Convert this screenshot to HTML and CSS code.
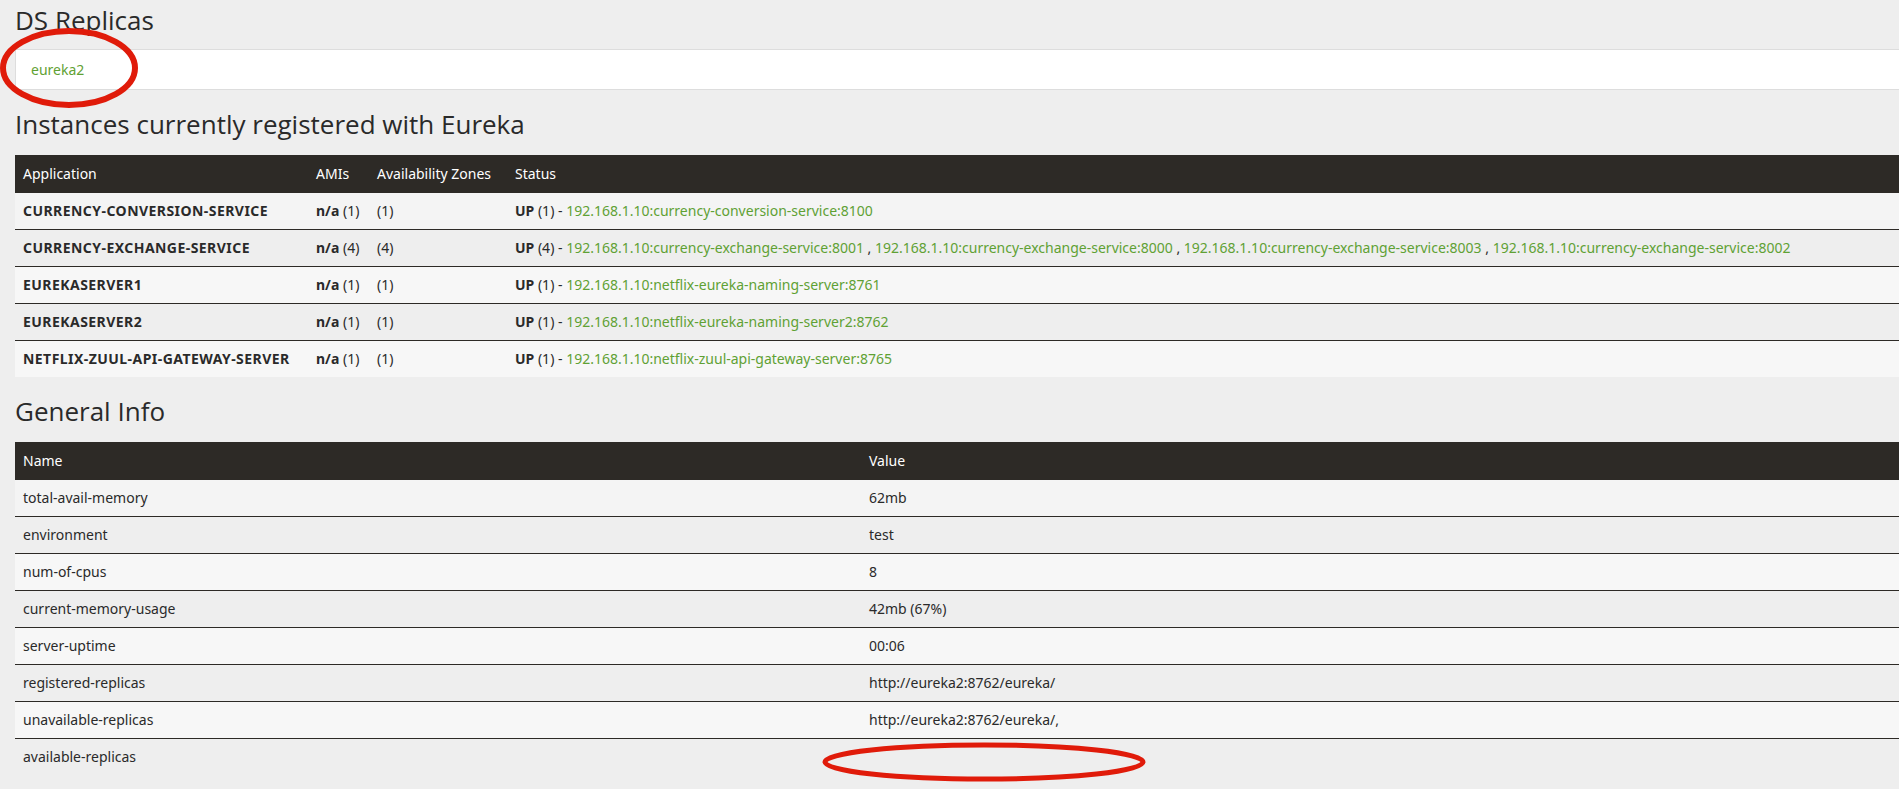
FILE: index.html
```html
<!DOCTYPE html>
<html lang="en">
<head>
<meta charset="UTF-8">
<title>Eureka</title>
<link rel="stylesheet" href="styles.css">
</head>
<body>
<div class="content">
    <h1 class="section-title first">DS Replicas</h1>
    <ul class="replicas">
        <li><a href="#">eureka2</a></li>
    </ul>

    <h1 class="section-title">Instances currently registered with Eureka</h1>
    <table class="data instances">
        <thead>
            <tr>
                <th class="col-app">Application</th>
                <th class="col-ami">AMIs</th>
                <th class="col-zone">Availability Zones</th>
                <th>Status</th>
            </tr>
        </thead>
        <tbody>
            <tr>
                <td class="app-name"><b>CURRENCY-CONVERSION-SERVICE</b></td>
                <td><b>n/a</b> (1)</td>
                <td>(1)</td>
                <td><b>UP</b> (1) - <a href="#">192.168.1.10:currency-conversion-service:8100</a></td>
            </tr>
            <tr>
                <td class="app-name"><b>CURRENCY-EXCHANGE-SERVICE</b></td>
                <td><b>n/a</b> (4)</td>
                <td>(4)</td>
                <td><b>UP</b> (4) - <a href="#">192.168.1.10:currency-exchange-service:8001</a> , <a href="#">192.168.1.10:currency-exchange-service:8000</a> , <a href="#">192.168.1.10:currency-exchange-service:8003</a> , <a href="#">192.168.1.10:currency-exchange-service:8002</a></td>
            </tr>
            <tr>
                <td class="app-name"><b>EUREKASERVER1</b></td>
                <td><b>n/a</b> (1)</td>
                <td>(1)</td>
                <td><b>UP</b> (1) - <a href="#">192.168.1.10:netflix-eureka-naming-server:8761</a></td>
            </tr>
            <tr>
                <td class="app-name"><b>EUREKASERVER2</b></td>
                <td><b>n/a</b> (1)</td>
                <td>(1)</td>
                <td><b>UP</b> (1) - <a href="#">192.168.1.10:netflix-eureka-naming-server2:8762</a></td>
            </tr>
            <tr>
                <td class="app-name"><b>NETFLIX-ZUUL-API-GATEWAY-SERVER</b></td>
                <td><b>n/a</b> (1)</td>
                <td>(1)</td>
                <td><b>UP</b> (1) - <a href="#">192.168.1.10:netflix-zuul-api-gateway-server:8765</a></td>
            </tr>
        </tbody>
    </table>

    <h1 class="section-title">General Info</h1>
    <table class="data general">
        <thead>
            <tr>
                <th class="col-name">Name</th>
                <th>Value</th>
            </tr>
        </thead>
        <tbody>
            <tr><td>total-avail-memory</td><td>62mb</td></tr>
            <tr><td>environment</td><td>test</td></tr>
            <tr><td>num-of-cpus</td><td>8</td></tr>
            <tr><td>current-memory-usage</td><td>42mb (67%)</td></tr>
            <tr><td>server-uptime</td><td>00:06</td></tr>
            <tr><td>registered-replicas</td><td>http://eureka2:8762/eureka/</td></tr>
            <tr><td>unavailable-replicas</td><td>http://eureka2:8762/eureka/,</td></tr>
            <tr><td>available-replicas</td><td></td></tr>
        </tbody>
    </table>
</div>

<!-- red marker rings drawn over the screenshot -->
<svg class="mark mark-replica" width="140" height="82" viewBox="0 0 140 82">
    <ellipse cx="69" cy="40" rx="66" ry="37"/>
</svg>
<svg class="mark mark-available" width="330" height="46" viewBox="0 0 330 46">
    <ellipse cx="164" cy="22" rx="159" ry="17"/>
</svg>
</body>
</html>
```

FILE: styles.css
```css
body {
    margin: 0;
    position: relative;
    background: #eeeeee;
    color: #2a2a2a;
    font-family: "Noto Sans", "Open Sans", sans-serif;
    font-size: 14px;
    line-height: 20px;
}
a {
    color: #5fa134;
    text-decoration: none;
}
.content {
    padding: 0 0 14px 15px;
}
.section-title {
    margin: 19px 0 16px;
    font-family: "Open Sans", sans-serif;
    font-size: 26px;
    font-weight: 400;
    line-height: 30px;
    color: #2a2a2a;
}
.section-title.first {
    margin: 5px 0 14px;
}
.replicas {
    list-style: none;
    margin: 0;
    padding: 10px 15px;
    background: #fff;
    border: 1px solid #dddddd;
    border-right: none;
}
.replicas li {
    line-height: 19px;
}
.data {
    width: 100%;
    border-collapse: collapse;
}
.data th {
    background: #2d2a26;
    color: #fff;
    font-weight: 400;
    text-align: left;
    padding: 9px 8px;
}
.data td {
    padding: 8px 8px;
    border-top: 1px solid #2d2a26;
    vertical-align: top;
}
.data tbody tr:first-child td {
    border-top: none;
}
.data tbody tr:nth-child(odd) td {
    background: #f7f7f7;
}
.data tbody tr:nth-child(1) td {
    background: #f4f4f4;
}
.app-name b {
    letter-spacing: 0.45px;
}
.col-app {
    width: 277px;
}
.col-ami {
    width: 45px;
}
.col-zone {
    width: 122px;
}
.col-name {
    width: 830px;
}
.mark {
    position: absolute;
}
.mark ellipse {
    fill: none;
    stroke: #e01b0a;
}
.mark-replica {
    left: 0;
    top: 28px;
}
.mark-replica ellipse {
    stroke-width: 6;
}
.mark-available {
    left: 820px;
    top: 740px;
}
.mark-available ellipse {
    stroke-width: 5;
}
```
